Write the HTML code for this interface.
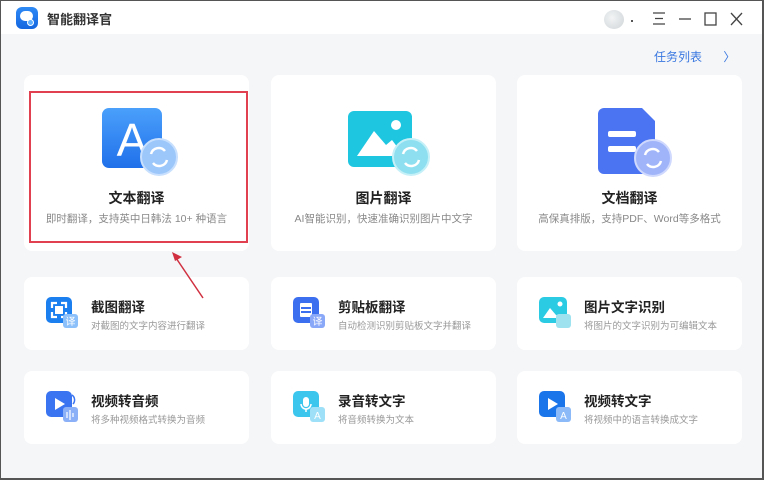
<!DOCTYPE html>
<html><head><meta charset="utf-8"><style>
*{margin:0;padding:0;box-sizing:border-box}
body{width:764px;height:480px;overflow:hidden;background:#333;font-family:"Liberation Sans","Noto Sans CJK SC",sans-serif;position:relative}
.win{position:absolute;left:0;top:0;width:764px;height:480px;background:#f5f6f8;border:1px solid #555;border-width:1px 2px 2px 1px}
.tb{position:absolute;left:0;top:0;width:100%;height:33px;background:#fff}
.a{position:absolute}
.card{position:absolute;background:#fff;border-radius:8px}
.t1{position:absolute;width:100%;text-align:center;font-size:14px;font-weight:bold;color:#222}
.s1{position:absolute;width:100%;text-align:center;font-size:10.5px;color:#888}
.t2{position:absolute;left:67px;top:19px;font-size:13.5px;color:#222;font-weight:bold}
.s2{position:absolute;left:67px;top:41px;font-size:9.5px;color:#999}
.ic{position:absolute;left:22px;top:20px;width:32px;height:32px}
</style></head><body>
<div class="win">
<div class="tb">
 <div class="a" style="left:15px;top:6px;width:22px;height:22px;border-radius:6px;background:linear-gradient(#2f8af5,#1466e0)"><div class="a" style="left:4px;top:4px;width:13px;height:10px;border-radius:5px;background:#fff"></div><div class="a" style="left:11px;top:12px;width:7px;height:7px;border-radius:50%;background:#5fb0ff;border:1px solid #fff"></div></div>
 <div class="a" style="left:46px;top:8px;font-size:13px;font-weight:bold;color:#333">智能翻译官</div>
 <div class="a" style="left:603px;top:9px;width:20px;height:19px;border-radius:50%;background:radial-gradient(circle at 40% 40%,#f2f4f5,#cfd4d7)"></div>
 <div class="a" style="left:630px;top:19px;width:2px;height:2px;background:#555"></div>
 <svg class="a" style="left:648px;top:9px" width="100" height="18" viewBox="0 0 100 18" fill="none" stroke="#444" stroke-width="1.3"><path d="M4 3h12M6 8.5h8M4 14h12"/><path d="M30 9h12"/><rect x="56" y="3" width="11" height="12"/><path d="M82 3l11 12M93 3l-11 12"/></svg>
</div>
<div class="a" style="left:653px;top:47px;font-size:12px;color:#3a78e0">任务列表 <span style="margin-left:18px">〉</span></div>

<div class="card" style="left:23px;top:74px;width:225px;height:176px">
 <svg class="a" style="left:78px;top:33px" width="78" height="70" viewBox="0 0 78 70"><defs><linearGradient id="g1" x1="0" y1="0" x2="0" y2="1"><stop offset="0" stop-color="#4aa0fb"/><stop offset="1" stop-color="#2070ea"/></linearGradient></defs><rect x="0" y="0" width="60" height="60" rx="7" fill="url(#g1)"/><text x="30" y="48" font-family="Liberation Sans" font-size="46" fill="#fff" text-anchor="middle">A</text><circle cx="57" cy="49" r="18" fill="#9cc7fb" stroke="#c8e0fd" stroke-width="2"/><path d="M49 46a8 8 0 0 1 14-3M65 52a8 8 0 0 1-14 3" stroke="#fff" stroke-width="2.5" fill="none"/></svg>
 <div class="t1" style="top:113px">文本翻译</div>
 <div class="s1" style="top:136px">即时翻译，支持英中日韩法 10+ 种语言</div>
</div>
<div class="card" style="left:270px;top:74px;width:225px;height:176px">
 <svg class="a" style="left:77px;top:36px" width="82" height="66" viewBox="0 0 82 66"><rect x="0" y="0" width="64" height="56" rx="6" fill="#1fc6e0"/><circle cx="48" cy="14" r="5" fill="#fff"/><path d="M9 45l17-25 12 14 6-5 12 16z" fill="#fff"/><circle cx="63" cy="46" r="18" fill="#8ee0f0" stroke="#c6f0f8" stroke-width="2"/><path d="M55 43a8 8 0 0 1 14-3M71 49a8 8 0 0 1-14 3" stroke="#fff" stroke-width="2.5" fill="none"/></svg>
 <div class="t1" style="top:113px">图片翻译</div>
 <div class="s1" style="top:136px">AI智能识别，快速准确识别图片中文字</div>
</div>
<div class="card" style="left:516px;top:74px;width:225px;height:176px">
 <svg class="a" style="left:80px;top:33px" width="78" height="70" viewBox="0 0 78 70"><path d="M7 0h38l13 13v47a6 6 0 0 1-6 6H7a6 6 0 0 1-6-6V6a6 6 0 0 1 6-6z" fill="#4a74f2"/><rect x="11" y="23" width="28" height="6" rx="2" fill="#fff"/><rect x="11" y="38" width="28" height="6" rx="2" fill="#fff"/><circle cx="56" cy="50" r="18" fill="#a0b4fa" stroke="#cfd8fd" stroke-width="2"/><path d="M48 47a8 8 0 0 1 14-3M64 53a8 8 0 0 1-14 3" stroke="#fff" stroke-width="2.5" fill="none"/></svg>
 <div class="t1" style="top:113px">文档翻译</div>
 <div class="s1" style="top:136px">高保真排版，支持PDF、Word等多格式</div>
</div>

<div class="a" style="left:28px;top:90px;width:219px;height:152px;border:2px solid #e04050"></div>

<div class="card" style="left:23px;top:276px;width:225px;height:73px">
 <svg class="ic" viewBox="0 0 32 32"><rect width="26" height="26" rx="5" fill="#1c7ff0"/><path d="M6 11V6h5M15 6h5v5M20 15v5h-5M11 20H6v-5" stroke="#fff" stroke-width="2.2" fill="none"/><rect x="9" y="9" width="8" height="8" fill="#fff"/><rect x="17" y="17" width="15" height="14" rx="3" fill="#8cc0fa"/><text x="24.5" y="28" font-size="10" fill="#fff" text-anchor="middle" font-family="Noto Sans CJK SC">译</text></svg>
 <div class="t2">截图翻译</div><div class="s2">对截图的文字内容进行翻译</div>
</div>
<div class="card" style="left:270px;top:276px;width:225px;height:73px">
 <svg class="ic" viewBox="0 0 32 32"><rect width="26" height="26" rx="5" fill="#3b6ff0"/><rect x="7" y="6" width="12" height="14" rx="1" fill="#fff"/><rect x="8" y="10" width="10" height="2" fill="#3b6ff0"/><rect x="8" y="14" width="10" height="2" fill="#3b6ff0"/><rect x="17" y="17" width="15" height="14" rx="3" fill="#8aa8f8"/><text x="24.5" y="28" font-size="10" fill="#fff" text-anchor="middle" font-family="Noto Sans CJK SC">译</text></svg>
 <div class="t2">剪贴板翻译</div><div class="s2">自动检测识别剪贴板文字并翻译</div>
</div>
<div class="card" style="left:516px;top:276px;width:225px;height:73px">
 <svg class="ic" viewBox="0 0 32 32"><rect width="28" height="26" rx="5" fill="#2ccbe4"/><circle cx="21" cy="7" r="2.5" fill="#fff"/><path d="M4 21l7-10 6 7 5 3z" fill="#fff"/><rect x="17" y="17" width="15" height="14" rx="3" fill="#9ee2f0"/></svg>
 <div class="t2">图片文字识别</div><div class="s2">将图片的文字识别为可编辑文本</div>
</div>

<div class="card" style="left:23px;top:370px;width:225px;height:73px">
 <svg class="ic" viewBox="0 0 32 32"><rect width="26" height="26" rx="5" fill="#3a74f0"/><path d="M9 7l10 6-10 6z" fill="#fff"/><rect x="17" y="16" width="15" height="15" rx="3" fill="#8cb0f8"/><path d="M21 21v6M24 19v10M27 22v4" stroke="#fff" stroke-width="1.2"/><path d="M26 4a6 6 0 0 1 1 9" stroke="#3a74f0" stroke-width="1.5" fill="none"/></svg>
 <div class="t2">视频转音频</div><div class="s2">将多种视频格式转换为音频</div>
</div>
<div class="card" style="left:270px;top:370px;width:225px;height:73px">
 <svg class="ic" viewBox="0 0 32 32"><rect width="26" height="26" rx="5" fill="#3cc6ee"/><rect x="10" y="6" width="6" height="10" rx="3" fill="#fff"/><path d="M8 13a5 5 0 0 0 10 0M13 18v3" stroke="#fff" stroke-width="1.5" fill="none"/><rect x="17" y="16" width="15" height="15" rx="3" fill="#9ee0f8"/><text x="24.5" y="28" font-size="10" fill="#fff" text-anchor="middle">A</text></svg>
 <div class="t2">录音转文字</div><div class="s2">将音频转换为文本</div>
</div>
<div class="card" style="left:516px;top:370px;width:225px;height:73px">
 <svg class="ic" viewBox="0 0 32 32"><rect width="26" height="26" rx="5" fill="#1a74ea"/><path d="M9 7l10 6-10 6z" fill="#fff"/><rect x="17" y="16" width="15" height="15" rx="3" fill="#8cbaf8"/><text x="24.5" y="28" font-size="10" fill="#fff" text-anchor="middle">A</text></svg>
 <div class="t2">视频转文字</div><div class="s2">将视频中的语言转换成文字</div>
</div>
<svg class="a" style="left:160px;top:245px" width="50" height="60" viewBox="0 0 50 60"><path d="M42 52L13 9" stroke="#d03040" stroke-width="1.5"/><path d="M11 6l10 5-7 4z" fill="#d03040"/></svg>
</div>
</body></html>
